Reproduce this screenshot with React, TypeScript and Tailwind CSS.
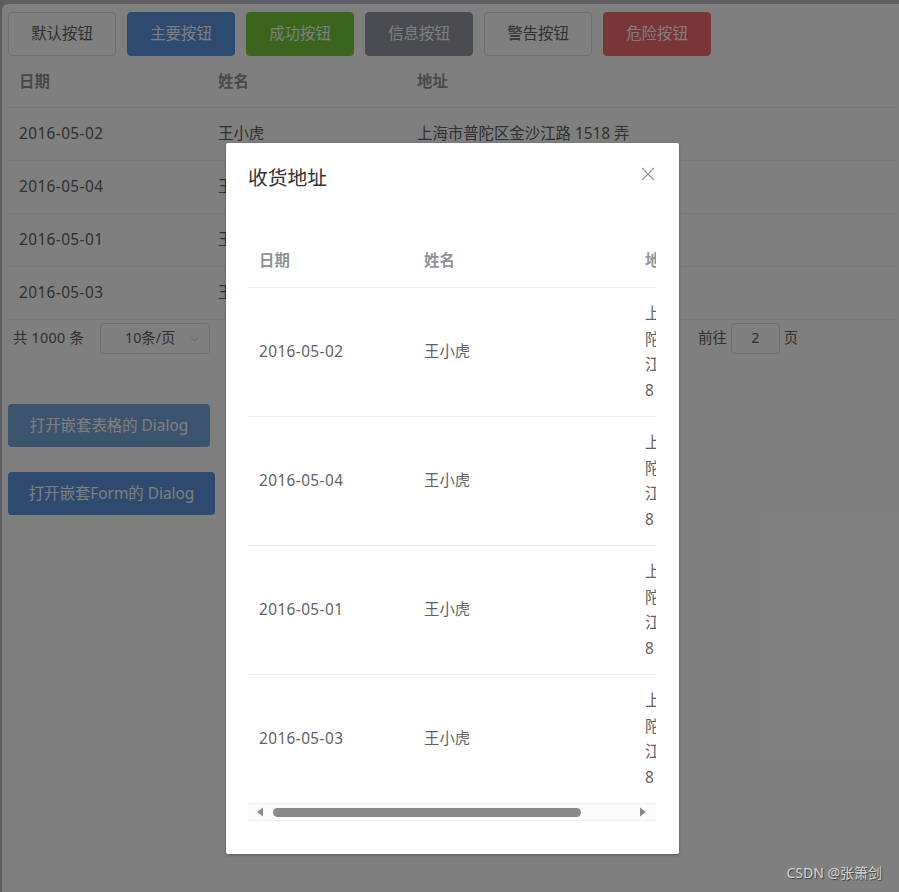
import { ChevronDown, ChevronLeft, ChevronRight } from 'lucide-react';

const buttons = [
  { label: '默认按钮', cls: 'bg-white border-[#dcdfe6] text-[#606266]' },
  { label: '主要按钮', cls: 'bg-[#5a96dc] border-[#5a96dc] text-white' },
  { label: '成功按钮', cls: 'bg-[#76c83a] border-[#76c83a] text-white' },
  { label: '信息按钮', cls: 'bg-[#9699a2] border-[#9699a2] text-white' },
  { label: '警告按钮', cls: 'bg-white border-[#dcdfe6] text-[#606266]' },
  { label: '危险按钮', cls: 'bg-[#f56c6c] border-[#f56c6c] text-white' },
];

const rows = [
  { date: '2016-05-02', name: '王小虎', address: '上海市普陀区金沙江路 1518 弄' },
  { date: '2016-05-04', name: '王小虎', address: '上海市普陀区金沙江路 1518 弄' },
  { date: '2016-05-01', name: '王小虎', address: '上海市普陀区金沙江路 1518 弄' },
  { date: '2016-05-03', name: '王小虎', address: '上海市普陀区金沙江路 1518 弄' },
];

const pages = ['1', '2', '3', '4', '5', '6', '…', '100'];

function BackTable() {
  return (
    <div className="w-[888px] text-[15.4px] text-[#606266]">
      <div className="flex h-[52px] items-center border-b border-[#ebeef5] font-bold text-[#909399]">
        <div className="w-[199px] pl-[11px]">日期</div>
        <div className="w-[199px] pl-[11px]">姓名</div>
        <div className="flex-1 pl-[11px]">地址</div>
      </div>
      {rows.map((row, index) => (
        <div
          key={`back-row-${index}`}
          className="flex h-[53px] items-center border-b border-[#ebeef5]"
        >
          <div className="w-[199px] pl-[11px] tracking-[0.4px]">{row.date}</div>
          <div className="w-[199px] pl-[11px]">{row.name}</div>
          <div className="flex-1 pl-[11px]">{row.address}</div>
        </div>
      ))}
    </div>
  );
}

function Pagination() {
  return (
    <div className="mt-[2px] flex h-[32px] items-center pl-[5px] text-[14.3px] text-[#606266]">
      <span className="mr-[16px] tracking-[0.3px]">共 1000 条</span>
      <div className="relative flex h-[31px] w-[110px] items-center justify-center rounded-[4px] border border-[#dcdfe6] pr-[10px]">
        10条/页
        <ChevronDown className="absolute right-[8px] top-[9px] h-[13px] w-[13px] text-[#c0c4cc]" strokeWidth={1.5} />
      </div>
      <div className="ml-[11px] flex items-center">
        <ChevronLeft className="mx-[10px] h-[14px] w-[14px] text-[#303133]" />
        {pages.map((p) => (
          <span
            key={`page-${p}`}
            className={`w-[39px] text-center font-bold ${p === '2' ? 'text-[#409eff]' : 'text-[#303133]'}`}
          >
            {p}
          </span>
        ))}
        <ChevronRight className="mx-[10px] h-[14px] w-[14px] text-[#303133]" />
      </div>
      <div className="ml-[97px] flex items-center">
        <span>前往</span>
        <div className="mx-[4px] flex h-[31px] w-[49px] items-center justify-center rounded-[4px] border border-[#dcdfe6]">
          2
        </div>
        <span>页</span>
      </div>
    </div>
  );
}

function DialogTable() {
  return (
    <div className="w-[408px] overflow-hidden text-[15.4px] text-[#606266]">
      <div className="w-[700px]">
        <div className="flex h-[53px] w-[408px] items-center border-b border-[#ebeef5] font-bold text-[#909399]">
          <div className="w-[165px] shrink-0 pl-[11px]">日期</div>
          <div className="w-[220px] shrink-0 pl-[11px]">姓名</div>
          <div className="shrink-0 pl-[12px]">地址</div>
        </div>
        {rows.map((row, index) => (
          <div
            key={`dlg-row-${index}`}
            className="flex h-[129px] w-[408px] items-center border-b border-[#ebeef5]"
          >
            <div className="w-[165px] shrink-0 pl-[11px] tracking-[0.4px]">{row.date}</div>
            <div className="w-[220px] shrink-0 pl-[11px]">{row.name}</div>
            <div className="ml-[12px] w-[64px] shrink-0 break-all leading-[25.5px]">
              {row.address}
            </div>
          </div>
        ))}
      </div>
      <div className="flex h-[17px] items-center border-b border-[#ebeef5] bg-[#fafafa]">
        <svg width="8" height="10" viewBox="0 0 8 10" className="ml-[8px]">
          <path d="M1 5 L7 0.5 L7 9.5 Z" fill="#8a8a8a" />
        </svg>
        <div className="ml-[9px] h-[9px] w-[308px] rounded-full bg-[#8a8a8a]" />
        <svg width="8" height="10" viewBox="0 0 8 10" className="ml-auto mr-[9px]">
          <path d="M7 5 L1 0.5 L1 9.5 Z" fill="#8a8a8a" />
        </svg>
      </div>
    </div>
  );
}

export default function App() {
  return (
    <div className="relative h-[892px] w-[899px] overflow-hidden bg-[#b9b9c2] pl-[2px] pt-[4px] font-['Noto_Sans','Noto_Sans_CJK_SC',sans-serif]">
      <div className="h-full rounded-tl-[6px] bg-white pl-[6px] pt-[8px]">
        <div className="flex gap-[11px]">
          {buttons.map((b) => (
            <button
              key={b.label}
              className={`h-[44px] w-[108px] rounded-[4px] border text-[15.4px] ${b.cls}`}
            >
              {b.label}
            </button>
          ))}
        </div>

        <BackTable />
        <Pagination />

        <div className="mt-[50px] flex flex-col items-start gap-[25px]">
          <button className="h-[43px] w-[202px] rounded-[4px] bg-[#7aa8dc] text-[15.4px] text-white">
            打开嵌套表格的 Dialog
          </button>
          <button className="h-[43px] w-[207px] rounded-[4px] bg-[#5a96dc] text-[15.4px] text-white">
            打开嵌套Form的 Dialog
          </button>
        </div>
      </div>

      <div className="absolute inset-0 bg-black/50" />

      <div className="absolute left-[226px] top-[143px] w-[453px] rounded-[2px] bg-white shadow-[0_1px_3px_rgba(0,0,0,0.3)]">
        <div className="relative px-[22px] pb-[11px] pt-[22px]">
          <span className="text-[19.8px] leading-[26px] text-[#303133]">收货地址</span>
          <svg
            width="14"
            height="14"
            viewBox="0 0 14 14"
            className="absolute right-[24px] top-[24px]"
          >
            <path d="M1 1 L13 13 M13 1 L1 13" stroke="#909399" strokeWidth="1.2" fill="none" />
          </svg>
        </div>
        <div className="px-[22px] pb-[33px] pt-[33px]">
          <DialogTable />
        </div>
      </div>

      <span className="absolute bottom-[9px] right-[17px] text-[14px] text-[#d4d4d4] [text-shadow:1px_1px_1px_rgba(0,0,0,0.5)]">
        CSDN @张箫剑
      </span>
    </div>
  );
}
